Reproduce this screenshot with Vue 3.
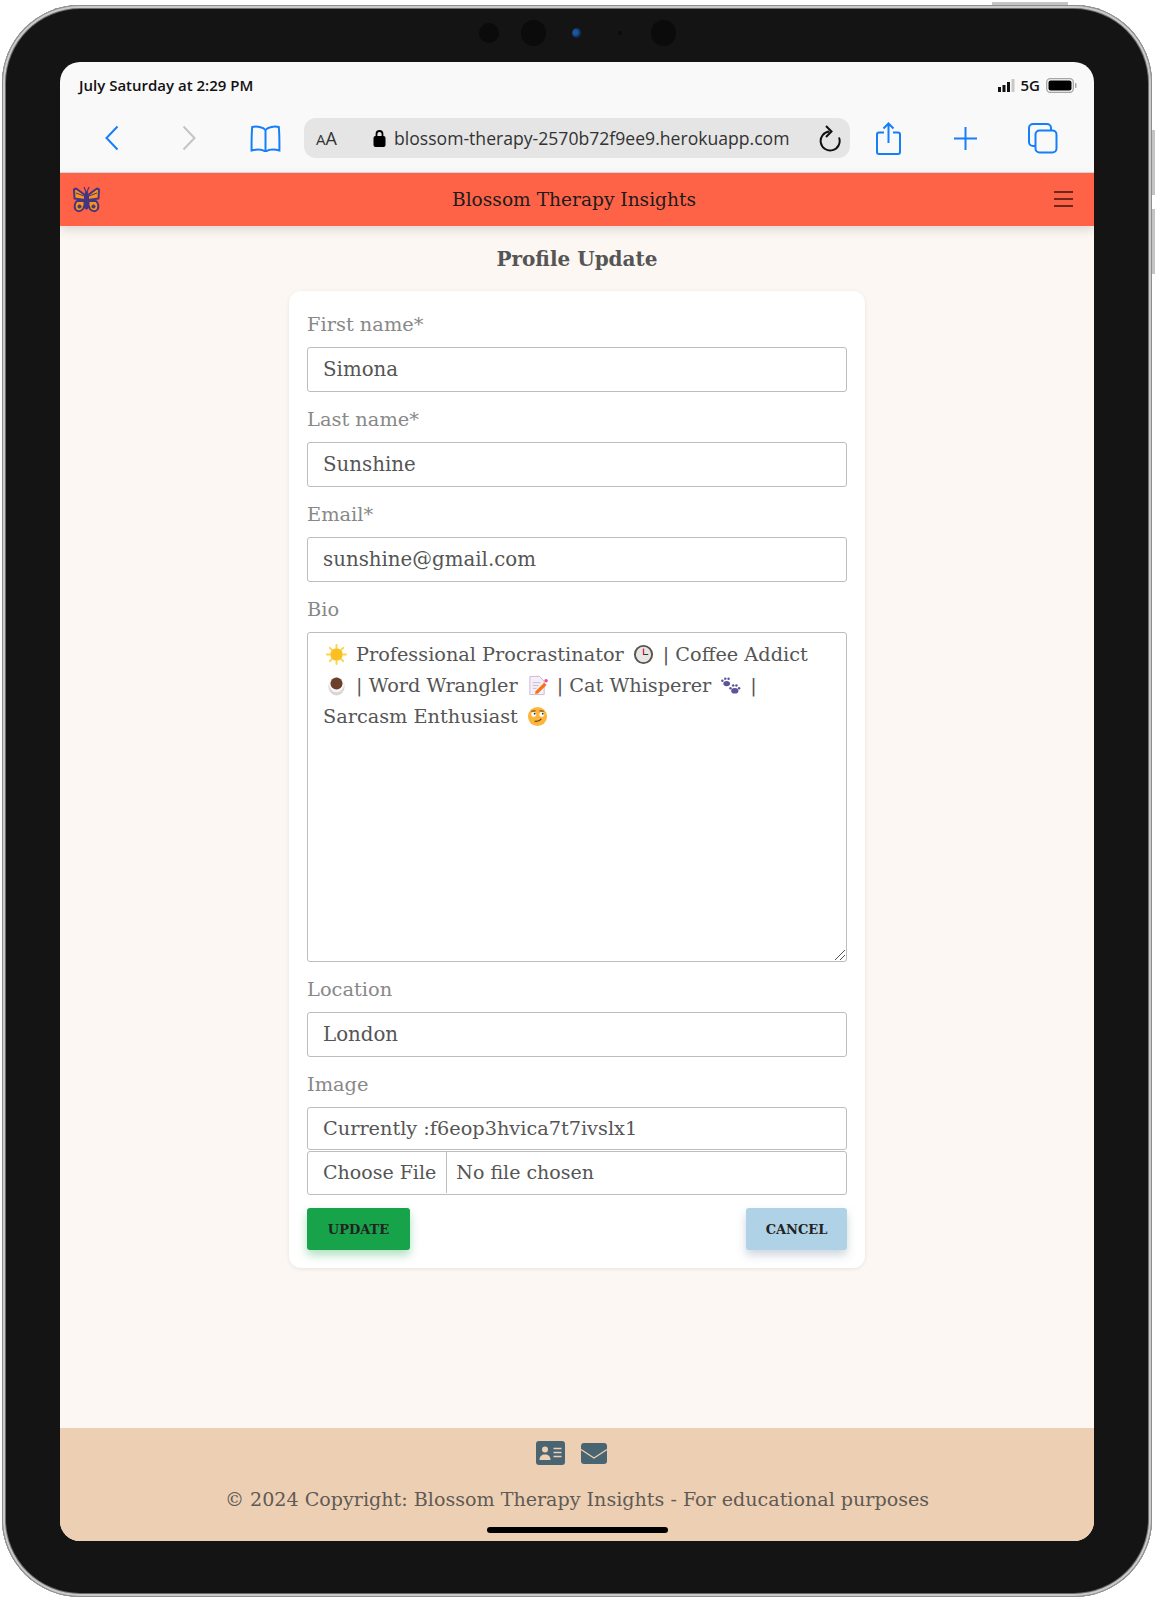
<template>
  <div class="page">
    <div class="device">
      <span class="side-btn top"></span>
      <span class="side-btn right-a"></span>
      <span class="side-btn right-b"></span>
      <span class="cam c1"></span>
      <span class="cam c2"></span>
      <span class="cam c3"></span>
      <span class="cam c4"></span>
      <span class="cam c5"></span>

      <div class="screen">
        <div class="statusbar">
          <span class="time">July Saturday at 2:29 PM</span>
          <div class="status-right">
            <svg width="17" height="13" viewBox="0 0 17 13">
              <rect x="0" y="8" width="3" height="5" fill="#111" />
              <rect x="4.500" y="6" width="3" height="7" fill="#111" />
              <rect x="9" y="3" width="3" height="10" fill="#111" />
              <rect x="13.500" y="0" width="3" height="13" fill="#c9c9c9" />
            </svg>
            <span class="net">5G</span>
            <svg width="31" height="15" viewBox="0 0 31 15">
              <rect x="0.700" y="0.700" width="26.600" height="13.600" rx="3.500" fill="none" stroke="#a5a5a5" stroke-width="1.300" />
              <rect x="2.500" y="2.500" width="23" height="10" rx="2" fill="#000" />
              <rect x="29" y="5" width="1.500" height="5" rx="0.700" fill="#a5a5a5" />
            </svg>
          </div>
        </div>

        <div class="toolbar">
          <div class="tool">
            <svg width="16" height="26" viewBox="0 0 16 26" fill="none" stroke="#147efb" stroke-width="2">
              <path d="M13.500 1.500 2.500 13l11 11.500" />
            </svg>
          </div>
          <div class="tool">
            <svg width="16" height="26" viewBox="0 0 16 26" fill="none" stroke="#c4c4c4" stroke-width="2">
              <path d="M2.500 1.500 13.500 13l-11 11.500" />
            </svg>
          </div>
          <div class="tool">
            <svg width="31" height="27" viewBox="0 0 31 27" fill="none" stroke="#147efb" stroke-width="2">
              <path d="M15.500 5C13 1.800 6.500 1 2.200 2 1.600 9 1.500 17 1.600 25.500c4.800-1.300 10.400-1 13.900 1 3.500-2 9.100-2.300 13.900-1 .1-8.500 0-16.500-.6-23.500C24.500 1 18 1.800 15.500 5zM15.500 5v21.500" />
            </svg>
          </div>
          <div class="address">
            <span class="aa"><small>A</small>A</span>
            <svg class="lock" width="13" height="18" viewBox="0 0 13 18">
              <path d="M3.500 8V5a3 3 0 0 1 6 0v3" fill="none" stroke="#000" stroke-width="1.800" />
              <rect x="0.500" y="7" width="12" height="11" rx="2" fill="#000" />
            </svg>
            <span class="url">blossom-therapy-2570b72f9ee9.herokuapp.com</span>
            <svg class="reload" width="24" height="27" viewBox="0 0 24 27" fill="none" stroke="#111" stroke-width="2">
              <path d="M21 12.500A9.500 9.500 0 1 1 11.500 6.500" />
              <path d="M8 1l5.500 5.500L8 12" />
            </svg>
          </div>
          <div class="tool">
            <svg width="25" height="33" viewBox="0 0 25 33" fill="none" stroke="#147efb" stroke-width="2">
              <path d="M8 10.500H3a2 2 0 0 0-2 2V30a2 2 0 0 0 2 2h19a2 2 0 0 0 2-2V12.500a2 2 0 0 0-2-2h-5" />
              <path d="M12.500 21V1.500M7.500 6.500l5-5 5 5" />
            </svg>
          </div>
          <div class="tool">
            <svg width="25" height="25" viewBox="0 0 25 25" fill="none" stroke="#147efb" stroke-width="2">
              <path d="M12.500 1v23M1 12.500h23" />
            </svg>
          </div>
          <div class="tool">
            <svg width="30" height="31" viewBox="0 0 30 31" fill="none" stroke="#147efb" stroke-width="2">
              <path d="M7 23H5a4 4 0 0 1-4-4V5a4 4 0 0 1 4-4h14a4 4 0 0 1 4 4v2" />
              <rect x="7.500" y="7.500" width="21" height="22" rx="4" />
            </svg>
          </div>
        </div>

        <nav class="navbar">
          <svg class="logo" width="27" height="27" viewBox="0 0 27 27" stroke="#45347f" stroke-width="2" stroke-linejoin="round">
            <path d="M12 14 1.500 12.500 1 3.500l2-1L12 9z" fill="#f7931e" />
            <path d="M15 14l10.500-1.500.5-9-2-1L15 9z" fill="#f7931e" />
            <path d="M11.500 15 4 15c-2.500 2-3 6-1.500 8.500 2 2.500 5.500 2 7.500-.5 1.500-2 2-5 1.500-8z" fill="#f7931e" />
            <path d="M15.500 15 23 15c2.500 2 3 6 1.500 8.500-2 2.500-5.500 2-7.500-.5-1.500-2-2-5-1.500-8z" fill="#f7931e" />
            <path d="M3 7l8 3M24 7l-8 3" stroke-width="1" fill="none" />
            <circle cx="6.500" cy="20.500" r="1.600" fill="#45347f" stroke-width="1" />
            <circle cx="20.500" cy="20.500" r="1.600" fill="#45347f" stroke-width="1" />
            <path d="M13.500 7v15" stroke-width="3.200" stroke-linecap="round" fill="none" />
            <path d="M13.500 7 11 1M13.500 7 16 1" stroke-width="1.200" fill="none" />
          </svg>
          <span class="brand">Blossom Therapy Insights</span>
          <span class="burger"><i></i><i></i><i></i></span>
        </nav>

        <main class="content">
          <h1 class="title">Profile Update</h1>
          <form class="card" @submit.prevent>
            <div v-for="f in topFields" :key="f.label" class="field">
              <label>{{ f.label }}</label>
              <input class="control" type="text" :value="f.value" />
            </div>

            <div class="field">
              <label>Bio</label>
              <div class="control bio">
                <div class="line">
                  <svg class="emoji" viewBox="0 0 22 22">
                    <g stroke="#fcd34d" stroke-width="2" stroke-linecap="round">
                      <path d="M11 1v3M11 18v3M1 11h3M18 11h3M4 4l2 2M16 16l2 2M4 18l2-2M16 6l2-2" />
                    </g>
                    <circle cx="11" cy="11" r="6.500" fill="#fbbf24" />
                  </svg>
                  <span>Professional Procrastinator</span>
                  <svg class="emoji" viewBox="0 0 22 22">
                    <circle cx="11" cy="11" r="9" fill="#e8e6e3" stroke="#57534e" stroke-width="2" />
                    <path d="M11 5v6h5" fill="none" stroke="#333" stroke-width="1.200" />
                    <path d="M11 5v6" stroke="#e11d48" stroke-width="1.200" />
                  </svg>
                  <span>| Coffee Addict</span>
                </div>
                <div class="line">
                  <svg class="emoji" viewBox="0 0 22 22">
                    <ellipse cx="11" cy="12" rx="8.500" ry="9.500" fill="#d6d6d6" />
                    <ellipse cx="11" cy="10" rx="8" ry="8" fill="#f6f6f6" />
                    <circle cx="11" cy="9" r="6.300" fill="#6b3f2a" />
                  </svg>
                  <span>| Word Wrangler</span>
                  <svg class="emoji" viewBox="0 0 22 22">
                    <path d="M3 1.500h10l5 5v14H3z" fill="#f5f0f7" stroke="#c9b8d6" />
                    <path d="M6 8h8M6 11h6M6 14h4" stroke="#c9b8d6" />
                    <path d="M9 17l9-9 2.500 2.500-9 9-3 .5z" fill="#f97316" />
                    <circle cx="20" cy="6" r="1.800" fill="#ec4899" />
                  </svg>
                  <span>| Cat Whisperer</span>
                  <svg class="emoji" viewBox="0 0 22 22" fill="#5b5499">
                    <ellipse cx="7" cy="9" rx="3.500" ry="2.800" />
                    <circle cx="2.500" cy="6" r="1.300" />
                    <circle cx="5.500" cy="3.800" r="1.300" />
                    <circle cx="9" cy="4" r="1.300" />
                    <ellipse cx="15.500" cy="16.500" rx="3.800" ry="3" />
                    <circle cx="11" cy="14" r="1.300" />
                    <circle cx="13.800" cy="11" r="1.300" />
                    <circle cx="17.200" cy="11" r="1.300" />
                    <circle cx="20" cy="14" r="1.300" />
                  </svg>
                  <span>|</span>
                </div>
                <div class="line">
                  <span>Sarcasm Enthusiast</span>
                  <svg class="emoji" viewBox="0 0 22 22" fill="none">
                    <circle cx="11" cy="11" r="10" fill="#fdb53c" />
                    <circle cx="7" cy="9" r="2.600" fill="#fff" />
                    <circle cx="15.500" cy="9" r="2.600" fill="#fff" />
                    <circle cx="8" cy="8" r="1" fill="#333" />
                    <circle cx="16.500" cy="8" r="1" fill="#333" />
                    <path d="M4.500 5.500 9 5M13 5l4.500.500M8 16c3 .5 5.500-.5 7-2.500" stroke="#6b3f10" stroke-width="1.200" />
                  </svg>
                </div>
                <svg class="grip" width="12" height="12" viewBox="0 0 12 12" stroke="#555" stroke-width="1">
                  <path d="M11 1 1 11M11 6l-5 5" />
                </svg>
              </div>
            </div>

            <div class="field">
              <label>Location</label>
              <input class="control" type="text" value="London" />
            </div>

            <div class="field">
              <label>Image</label>
              <div class="control current">Currently :f6eop3hvica7t7ivslx1</div>
              <input class="control file" type="file" />
            </div>

            <div class="actions">
              <button class="btn update" type="submit">UPDATE</button>
              <button class="btn cancel" type="button">CANCEL</button>
            </div>
          </form>
        </main>

        <footer class="footer">
          <div class="footer-icons">
            <svg width="29" height="24" viewBox="0 0 29 24">
              <rect width="29" height="24" rx="3" fill="#4a6572" />
              <circle cx="9" cy="8.500" r="3" fill="#edcfb3" />
              <path d="M3.500 19c0-3.500 2-5.500 5.500-5.500s5.500 2 5.500 5.500z" fill="#edcfb3" />
              <path d="M17.500 7.500h8M17.500 11.500h8M17.500 15.500h8" stroke="#edcfb3" stroke-width="1.500" />
            </svg>
            <svg width="26" height="21" viewBox="0 0 26 21">
              <rect width="26" height="21" rx="3" fill="#4a6572" />
              <path d="M0 6.500 13 15 26 6.500" fill="none" stroke="#edcfb3" stroke-width="1.300" />
            </svg>
          </div>
          <p class="copy">© 2024 Copyright: Blossom Therapy Insights - For educational purposes</p>
          <span class="home-bar"></span>
        </footer>
      </div>
    </div>
  </div>
</template>

<script setup>
const topFields = [
  { label: "First name*", value: "Simona" },
  { label: "Last name*", value: "Sunshine" },
  { label: "Email*", value: "sunshine@gmail.com" },
];
</script>

<style>
html,
body {
  margin: 0;
  background: #fff;
}
</style>

<style scoped>
.page {
  width: 1155px;
  height: 1600px;
  padding: 5px 3px 3px 2px;
  box-sizing: border-box;
  font-family: "DejaVu Serif", "Liberation Serif", serif;
}

.device {
  position: relative;
  height: 100%;
  box-sizing: border-box;
  padding: 57px 58px 56px 58px;
  background: #141414;
  border-radius: 78px;
  box-shadow: inset 0 0 0 1px #8c8c8c, inset 0 0 0 3px #c9cacc, inset 0 0 0 4px #6d6d6d;
}

.side-btn {
  position: absolute;
  background: #c4c4c6;
}
.side-btn.top {
  top: -3px;
  left: 990px;
  width: 76px;
  height: 3px;
}
.side-btn.right-a,
.side-btn.right-b {
  right: -3px;
  width: 3px;
  height: 65px;
}
.side-btn.right-a {
  top: 125px;
}
.side-btn.right-b {
  top: 204px;
}

.cam {
  position: absolute;
  border-radius: 50%;
  background: #0b0b0b;
}
.c1 {
  left: 477px;
  top: 18px;
  width: 20px;
  height: 20px;
}
.c2 {
  left: 519px;
  top: 15px;
  width: 25px;
  height: 26px;
}
.c3 {
  left: 570px;
  top: 23px;
  width: 10px;
  height: 10px;
  background: radial-gradient(circle at 35% 45%, #1c56a0 25%, #0b1a2a 70%);
}
.c4 {
  left: 616px;
  top: 26px;
  width: 4px;
  height: 4px;
}
.c5 {
  left: 649px;
  top: 15px;
  width: 25px;
  height: 26px;
}

.screen {
  height: 1479px;
  display: flex;
  flex-direction: column;
  border-radius: 20px;
  overflow: hidden;
  background: #f9f9f9;
}

.statusbar {
  height: 44px;
  flex: none;
  box-sizing: border-box;
  display: flex;
  align-items: center;
  justify-content: space-between;
  padding: 2px 17px 0 19px;
}
.time {
  font: 600 15px "Open Sans", sans-serif;
  color: #111;
}
.status-right {
  display: flex;
  align-items: center;
  gap: 6px;
}
.net {
  font: 600 15px "Open Sans", sans-serif;
  color: #111;
}

.toolbar {
  height: 67px;
  flex: none;
  display: flex;
  align-items: center;
  padding: 0 0 2px 13px;
  border-bottom: 1px solid #dcdcdc;
  box-sizing: border-box;
}
.tool {
  width: 77px;
  flex: none;
  display: flex;
  justify-content: center;
}
.address {
  width: 546px;
  height: 40px;
  flex: none;
  display: flex;
  align-items: center;
  border-radius: 12px;
  background: #e5e5e5;
  padding: 0 8px 0 12px;
  box-sizing: border-box;
  font-family: "Open Sans", sans-serif;
  color: #333;
}
.aa {
  width: 57px;
  flex: none;
  font-size: 18px;
}
.aa small {
  font-size: 15px;
}
.lock {
  flex: none;
  margin-right: 8px;
}
.url {
  flex: 1;
  font-size: 17.600px;
  white-space: nowrap;
}
.reload {
  flex: none;
}

.navbar {
  position: relative;
  z-index: 1;
  height: 53px;
  flex: none;
  box-sizing: border-box;
  display: flex;
  align-items: center;
  justify-content: space-between;
  padding: 0 21px 1px 13px;
  background: #ff6347;
  box-shadow: 0 4px 10px rgba(0, 0, 0, 0.12);
}
.brand {
  font-size: 18.600px;
  color: #1b1b1b;
  margin-left: -6px;
}
.burger {
  width: 19px;
  display: flex;
  flex-direction: column;
  gap: 5.500px;
}
.burger i {
  display: block;
  height: 1.500px;
  background: rgba(60, 20, 15, 0.75);
}

.content {
  flex: 1;
  display: flex;
  flex-direction: column;
  align-items: center;
  background: #fcf7f3;
}
.title {
  margin: 0;
  height: 65px;
  line-height: 67px;
  font-size: 20px;
  font-weight: 700;
  color: #555;
}

.card {
  width: 576px;
  box-sizing: border-box;
  padding: 19px 18px 18px;
  background: #fff;
  border-radius: 12px;
  box-shadow: 0 1px 4px rgba(0, 0, 0, 0.08);
}

.field {
  margin-bottom: 13px;
}
.field label {
  display: block;
  height: 30px;
  line-height: 30px;
  margin-bottom: 7px;
  font-size: 19.400px;
  color: #888;
}

.control {
  display: block;
  width: 100%;
  height: 45px;
  box-sizing: border-box;
  padding: 0 15px;
  border: 1.500px solid #bdbdbd;
  border-radius: 3px;
  background: #fff;
  font-family: inherit;
  font-size: 19.800px;
  color: #555;
  outline: none;
}

.bio {
  position: relative;
  height: 330px;
  padding-top: 6px;
  font-size: 19.300px;
  line-height: 31px;
}
.line {
  white-space: nowrap;
}
.emoji {
  width: 21px;
  height: 21px;
  vertical-align: -4px;
  margin: 0 9px;
}
.line .emoji:first-child {
  margin-left: 3px;
}
.grip {
  position: absolute;
  right: 0;
  bottom: 0;
}

.current {
  height: 43px;
  line-height: 41px;
  font-size: 19.300px;
}
.file {
  height: 44px;
  margin-top: 1px;
  padding: 0 0 0 15px;
  line-height: 41px;
  font-size: 19px;
}
.file::file-selector-button {
  height: 41px;
  margin-right: 9px;
  padding: 0 10px 0 0;
  border: 0;
  border-right: 1.500px solid #bdbdbd;
  background: #fff;
  font: inherit;
  color: #555;
}

.actions {
  display: flex;
  justify-content: space-between;
}
.btn {
  height: 42px;
  padding: 0;
  border: 0;
  border-radius: 3px;
  font-family: inherit;
  font-size: 13px;
  font-weight: 700;
  color: #222;
}
.update {
  width: 103px;
  background: #16a34a;
  box-shadow: 0 5px 10px rgba(22, 163, 74, 0.35);
}
.cancel {
  width: 101px;
  background: #afd2e6;
  box-shadow: 0 5px 10px rgba(90, 120, 140, 0.3);
}

.footer {
  position: relative;
  height: 113px;
  flex: none;
  box-sizing: border-box;
  padding: 13px 0 0;
  background: #edcfb3;
  text-align: center;
}
.footer-icons {
  display: flex;
  justify-content: center;
  align-items: center;
  gap: 16px;
  margin-right: 12px;
}
.copy {
  margin: 20px 0 0;
  font-size: 19.100px;
  line-height: 30px;
  color: #5f5a55;
}
.home-bar {
  position: absolute;
  left: 427px;
  bottom: 8px;
  width: 181px;
  height: 6px;
  border-radius: 3px;
  background: #000;
}
</style>
